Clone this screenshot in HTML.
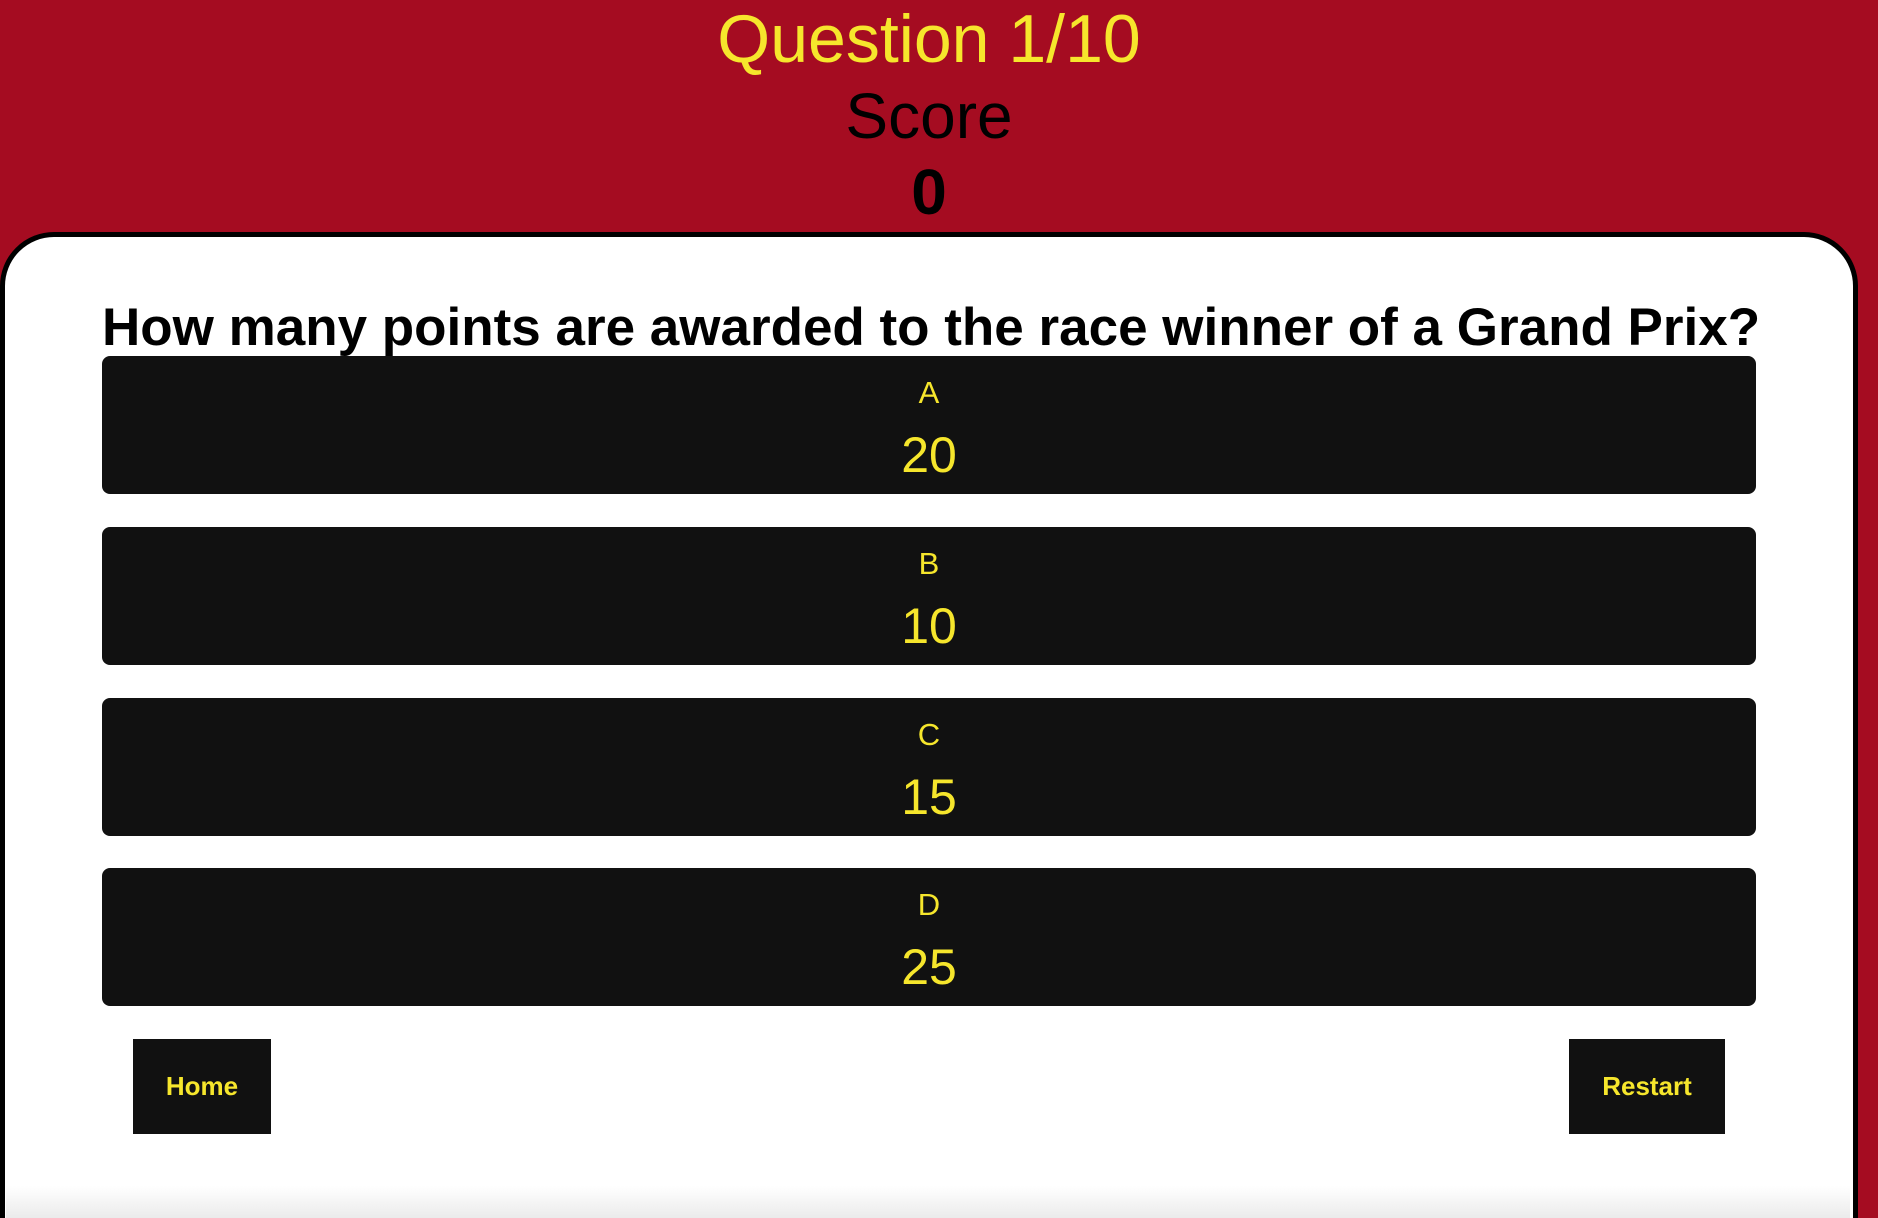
<!DOCTYPE html>
<html><head><meta charset="utf-8"><style>
html,body{margin:0;padding:0;width:1878px;height:1218px;overflow:hidden;}
body{background:#a50c21;position:relative;font-family:"Liberation Sans",sans-serif;}
.t{position:absolute;left:0;width:1858px;text-align:center;}
#q{top:0px;font-size:68px;color:#f6e62c;line-height:78px;}
#s{top:78px;font-size:64px;color:#000;line-height:76px;}
#z{top:154px;font-size:64px;font-weight:bold;color:#000;line-height:76px;}
#card{position:absolute;left:0;top:232px;width:1858px;height:1040px;background:#fff;border:5px solid #000;border-radius:54px;box-sizing:border-box;}
#fade{position:absolute;left:6px;top:1186px;width:1844px;height:32px;background:linear-gradient(#fff0,#ebebeb);}
#qt{position:absolute;left:102px;width:1654px;top:298px;font-size:53px;font-weight:bold;color:#000;white-space:nowrap;line-height:60px;}
.b{position:absolute;left:102px;width:1654px;height:138px;background:#111;border-radius:8px;color:#f6e62c;text-align:center;}
.b .l{position:absolute;top:18px;width:100%;font-size:31px;line-height:38px;}
.b .v{position:absolute;top:70px;width:100%;font-size:50px;line-height:58px;}
.s{position:absolute;top:1039px;height:95px;background:#111;color:#f6e62c;font-weight:bold;font-size:26px;line-height:95px;text-align:center;}
</style></head><body>
<div class="t" id="q">Question 1/10</div>
<div class="t" id="s">Score</div>
<div class="t" id="z">0</div>
<div id="card"></div>
<div id="fade"></div>
<div id="qt">How many points are awarded to the race winner of a Grand Prix?</div>
<div class="b" style="top:356px"><div class="l">A</div><div class="v">20</div></div>
<div class="b" style="top:527px"><div class="l">B</div><div class="v">10</div></div>
<div class="b" style="top:698px"><div class="l">C</div><div class="v">15</div></div>
<div class="b" style="top:868px"><div class="l">D</div><div class="v">25</div></div>
<div class="s" style="left:133px;width:138px">Home</div>
<div class="s" style="left:1569px;width:156px">Restart</div>
</body></html>
